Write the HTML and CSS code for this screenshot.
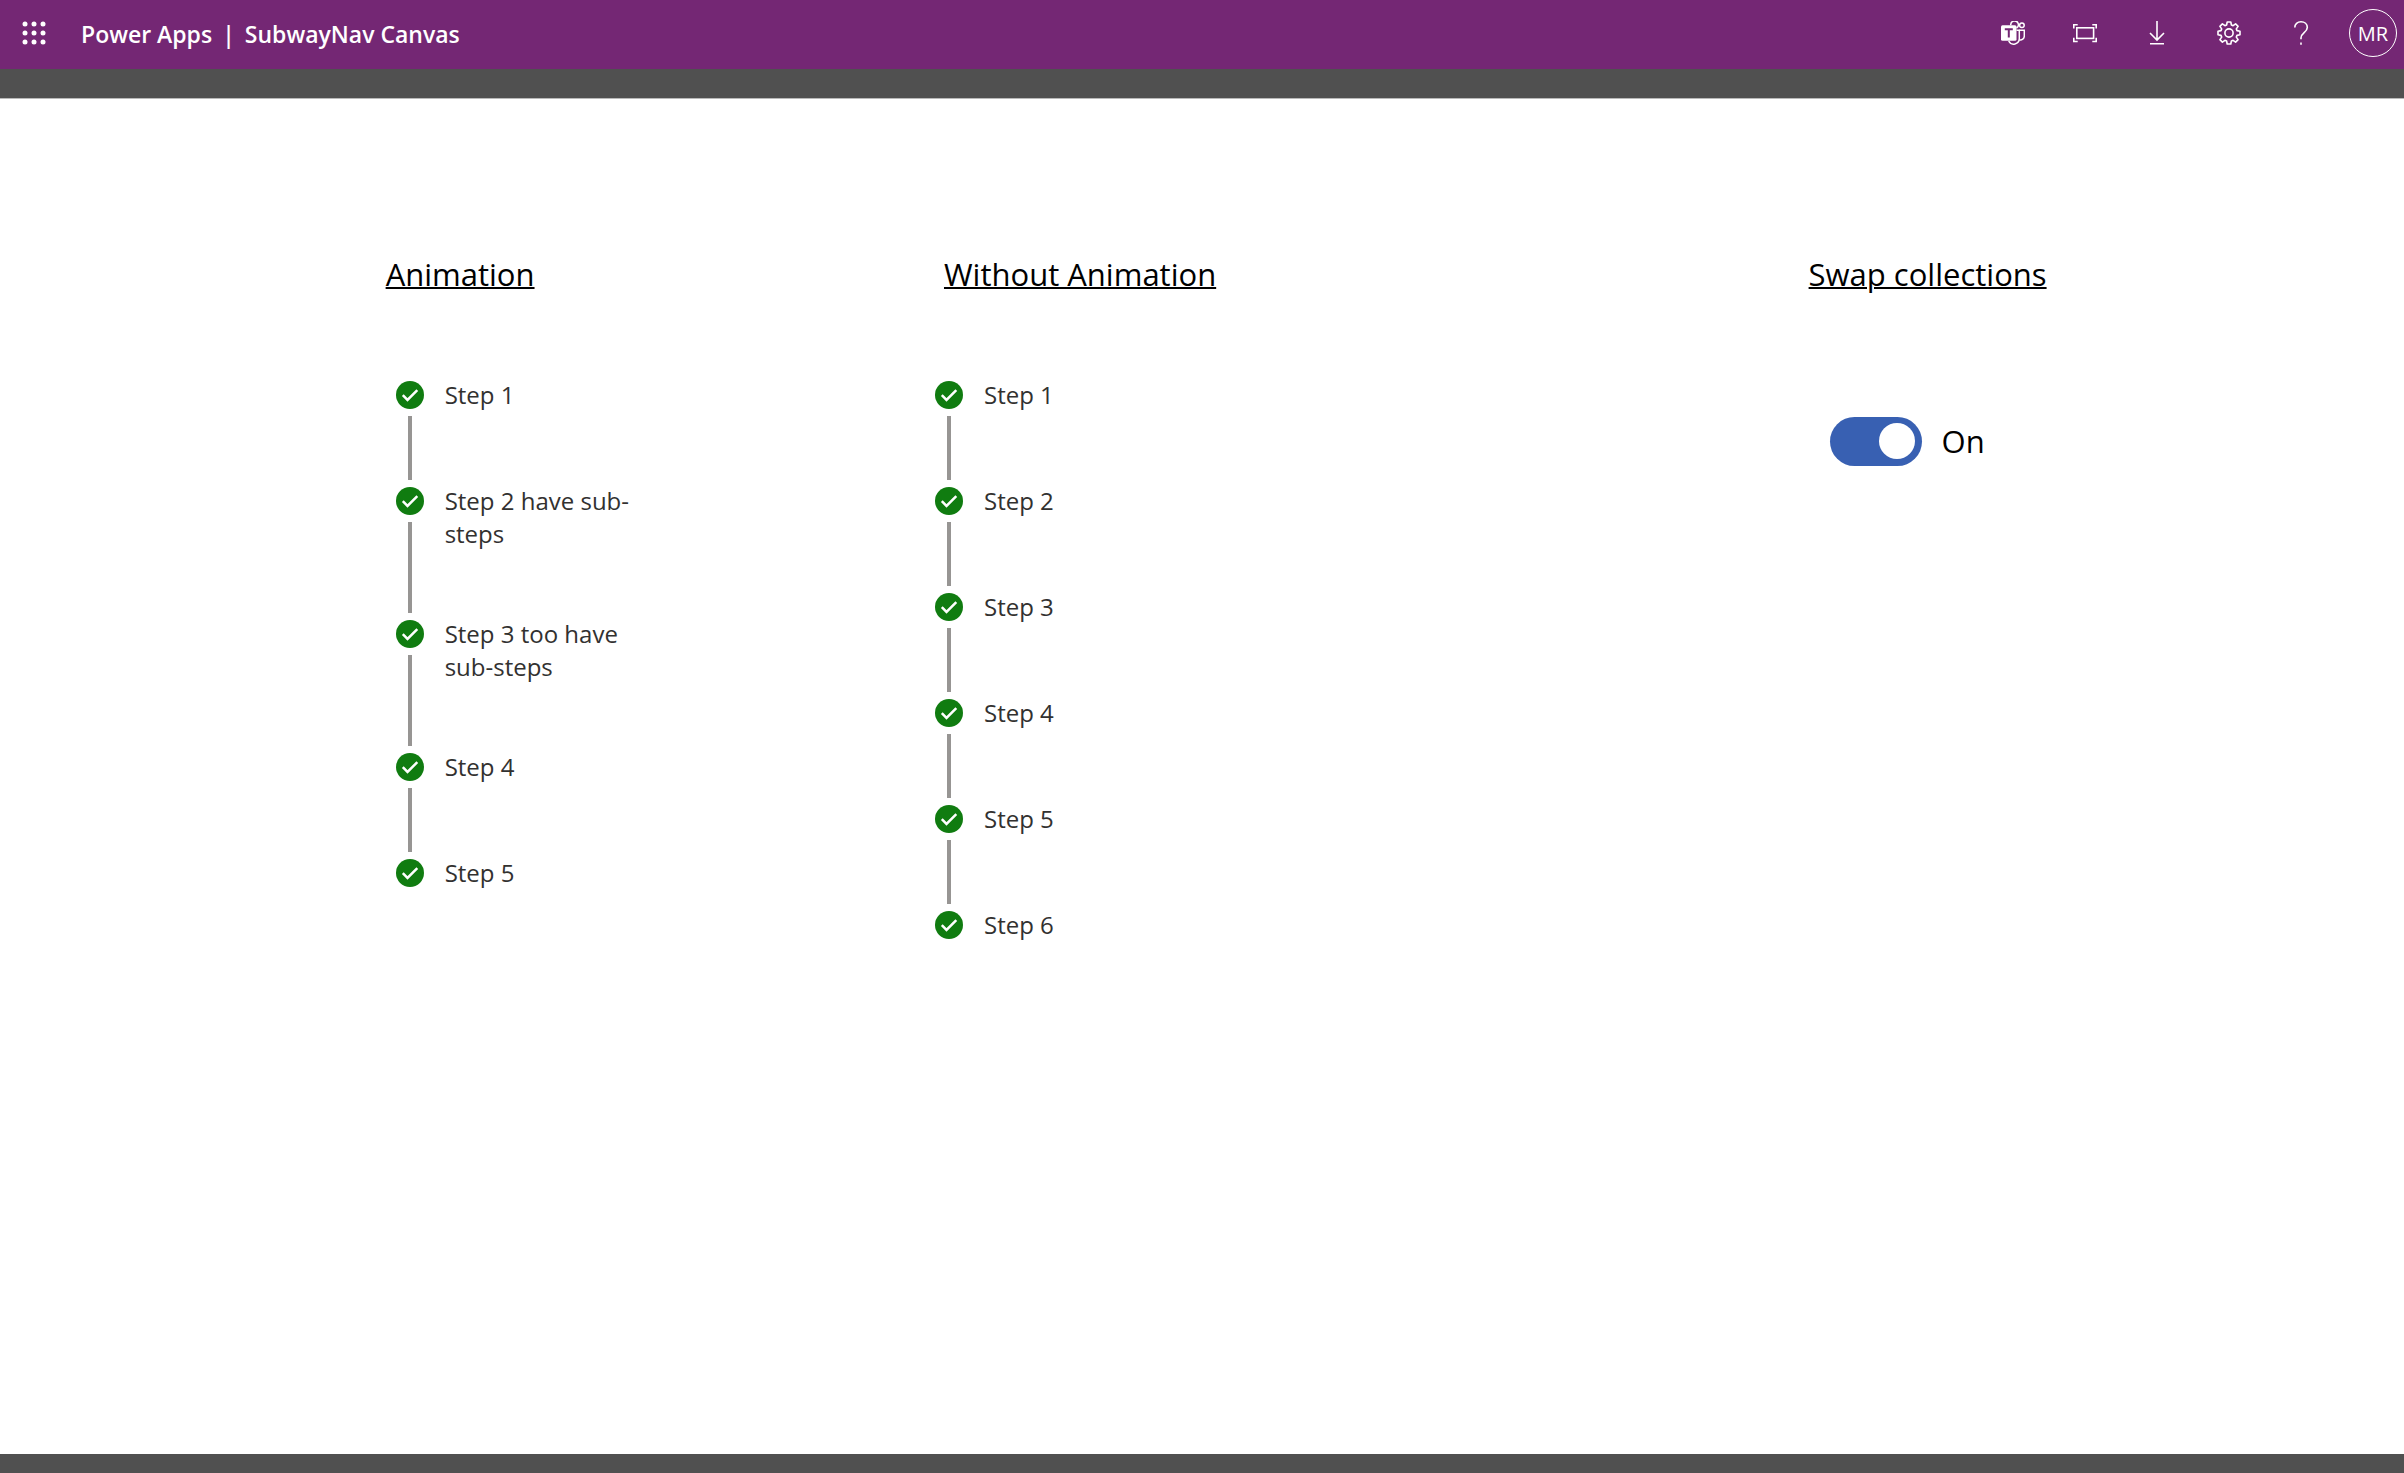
FILE: index.html
```html
<!DOCTYPE html>
<html lang="en">
<head>
<meta charset="utf-8">
<meta name="viewport" content="width=device-width, initial-scale=1">
<title>SubwayNav Canvas - Power Apps</title>
<link rel="stylesheet" href="styles.css">
</head>
<body>
<svg class="sprite" aria-hidden="true">
  <symbol id="done" viewBox="0 0 28 28">
    <circle cx="14" cy="14" r="14" fill="#107c10"/>
    <path d="M6.8 14.2l4.7 4.7 9.8-9.7" fill="none" stroke="#fff" stroke-width="2.5"/>
  </symbol>
</svg>
<header class="topbar">
  <button class="icon-button launcher" type="button" aria-label="App launcher">
    <svg class="icon" viewBox="0 0 24 24" fill="currentColor">
      <circle cx="3" cy="3" r="2.5"/><circle cx="12" cy="3" r="2.5"/><circle cx="21" cy="3" r="2.5"/>
      <circle cx="3" cy="12" r="2.5"/><circle cx="12" cy="12" r="2.5"/><circle cx="21" cy="12" r="2.5"/>
      <circle cx="3" cy="21" r="2.5"/><circle cx="12" cy="21" r="2.5"/><circle cx="21" cy="21" r="2.5"/>
    </svg>
  </button>
  <div class="brand"><a href="#">Power Apps</a><span>|</span><span>SubwayNav Canvas</span></div>
  <nav class="actions" aria-label="App actions">
    <button class="icon-button" type="button" aria-label="Chat in Teams">
      <svg class="icon" viewBox="0 0 24 24" fill="none" stroke="currentColor" stroke-width="1.5">
        <path d="M9.8 4.2A3.8 3.8 0 1 1 15.5 7"/>
        <circle cx="20.9" cy="4.2" r="2.3"/>
        <path d="M15.5 9.3h2.8v8.2a5.6 5.6 0 0 1-10.6 2.5"/>
        <path d="M18.3 9.3h5v5.6a4 4 0 0 1-5 3.9"/>
        <rect x="0" y="4.2" width="15.5" height="15.5" rx="1.5" fill="currentColor" stroke="none"/>
        <path d="M3.8 8.2h8M7.8 8.2v8.4" stroke="#742774" stroke-width="2"/>
      </svg>
    </button>
    <button class="icon-button" type="button" aria-label="Fit to window">
      <svg class="icon" viewBox="0 0 24 24" fill="none" stroke="currentColor" stroke-width="1.6">
        <rect x="3.8" y="6.8" width="16.8" height="10.6"/>
        <path d="M.8 7.5V3.8h3.9M19.3 3.8h3.9v3.7M.8 16.7v3.8h3.9M19.3 20.5h3.9v-3.8"/>
      </svg>
    </button>
    <button class="icon-button" type="button" aria-label="Download">
      <svg class="icon" viewBox="0 0 24 24" fill="none" stroke="currentColor" stroke-width="1.6">
        <path d="M12 0v18.5M5 12l7 7 7-7M5 22.8h14"/>
      </svg>
    </button>
    <button class="icon-button" type="button" aria-label="Settings">
      <svg class="icon" viewBox="0 0 24 24" fill="none" stroke="currentColor" stroke-width="1.6" stroke-linejoin="round">
        <circle cx="12" cy="12" r="4.1"/>
        <path d="M10.2 1h3.6l.6 3 1.7.7 2.5-1.8 2.5 2.5-1.8 2.5.7 1.7 3 .6v3.6l-3 .6-.7 1.7 1.8 2.5-2.5 2.5-2.5-1.8-1.7.7-.6 3h-3.6l-.6-3-1.7-.7-2.5 1.8-2.5-2.5 1.8-2.5-.7-1.7-3-.6v-3.6l3-.6.7-1.7-1.8-2.5 2.5-2.5 2.5 1.8 1.7-.7z"/>
      </svg>
    </button>
    <button class="icon-button" type="button" aria-label="Help">
      <svg class="icon" viewBox="0 0 24 24" fill="none" stroke="currentColor" stroke-width="1.6">
        <path d="M5.8 6.6C5.8 3 8.4.8 12 .8s6.3 2.2 6.3 5.7c0 4.8-6.3 5.5-6.3 10.3v1.4M12 21.4v2.4"/>
      </svg>
    </button>
    <button class="avatar" type="button" aria-label="Account">MR</button>
  </nav>
</header>
<main class="stage">
  <div class="screen">
    <section class="panel" aria-labelledby="h-animated">
      <h2 class="heading" id="h-animated">Animation</h2>
      <ol class="steps">
        <li class="step"><span class="marker"><svg class="done"><use href="#done"/></svg></span><button class="label" type="button">Step 1</button></li>
        <li class="step"><span class="marker"><svg class="done"><use href="#done"/></svg></span><button class="label" type="button">Step 2 have sub-steps</button></li>
        <li class="step"><span class="marker"><svg class="done"><use href="#done"/></svg></span><button class="label" type="button">Step 3 too have sub-steps</button></li>
        <li class="step"><span class="marker"><svg class="done"><use href="#done"/></svg></span><button class="label" type="button">Step 4</button></li>
        <li class="step"><span class="marker"><svg class="done"><use href="#done"/></svg></span><button class="label" type="button">Step 5</button></li>
      </ol>
    </section>
    <section class="panel panel-static" aria-labelledby="h-static">
      <h2 class="heading" id="h-static">Without Animation</h2>
      <ol class="steps">
        <li class="step"><span class="marker"><svg class="done"><use href="#done"/></svg></span><button class="label" type="button">Step 1</button></li>
        <li class="step"><span class="marker"><svg class="done"><use href="#done"/></svg></span><button class="label" type="button">Step 2</button></li>
        <li class="step"><span class="marker"><svg class="done"><use href="#done"/></svg></span><button class="label" type="button">Step 3</button></li>
        <li class="step"><span class="marker"><svg class="done"><use href="#done"/></svg></span><button class="label" type="button">Step 4</button></li>
        <li class="step"><span class="marker"><svg class="done"><use href="#done"/></svg></span><button class="label" type="button">Step 5</button></li>
        <li class="step"><span class="marker"><svg class="done"><use href="#done"/></svg></span><button class="label" type="button">Step 6</button></li>
      </ol>
    </section>
    <section class="panel" aria-labelledby="h-swap">
      <h2 class="heading" id="h-swap">Swap collections</h2>
      <div class="toggle">
        <input class="switch" id="swap" type="checkbox" role="switch" checked>
        <label for="swap">On</label>
      </div>
    </section>
  </div>
</main>
</body>
</html>
```
FILE: styles.css
```css
* {
  box-sizing: border-box;
}

body {
  margin: 0;
  min-height: 100vh;
  display: flex;
  flex-direction: column;
  font-family: "Open Sans", "Noto Sans", sans-serif;
  color: #000;
}

button {
  margin: 0;
  padding: 0;
  border: 0;
  background: none;
  color: inherit;
  font: inherit;
  cursor: pointer;
}

.sprite {
  display: none;
}

/* Top bar */
.topbar {
  display: flex;
  align-items: center;
  padding: 9px 7px 12px 0;
  background: #742774;
  color: #fff;
}

.icon-button {
  width: 72px;
  height: 48px;
  display: flex;
  align-items: center;
  justify-content: center;
}

.launcher {
  width: 67px;
}

.icon {
  width: 24px;
  height: 24px;
}

.brand {
  display: flex;
  gap: 10px;
  padding: 2px 0 0 14px;
  font-size: 23px;
  font-weight: 600;
  line-height: 32px;
}

.brand a {
  color: inherit;
  text-decoration: none;
}

.actions {
  display: flex;
  align-items: center;
  margin-left: auto;
}

.avatar {
  width: 48px;
  height: 48px;
  margin-left: 12px;
  border: 1px solid #fff;
  border-radius: 50%;
  font-size: 20px;
}

/* Canvas */
.stage {
  flex: 1;
  display: flex;
  padding: 29px 0 19px;
  background: #505050;
}

.screen {
  flex: 1;
  display: grid;
  grid-template-columns: 546fr 876fr 596fr;
  padding: 153px 0 0 16%;
  border-top: 1px solid #b9b9b9;
  background: #fff;
}

.heading {
  margin: 0;
  padding-left: 1px;
  font-size: 31px;
  font-weight: 400;
  line-height: 44px;
  text-decoration: underline;
  text-decoration-thickness: 2px;
}

.panel-static .heading {
  padding-left: 13px;
}

/* Steps */
.steps {
  margin: 82px 0 0;
  padding: 0 0 0 11px;
  list-style: none;
}

.panel-static .steps {
  padding-left: 4px;
}

.step {
  display: flex;
  gap: 21px;
  min-height: 106px;
}

.step:last-child {
  min-height: 0;
}

.marker {
  display: flex;
  flex-direction: column;
  align-items: center;
  padding: 3px 0 4px;
}

.done {
  width: 28px;
  height: 28px;
}

.step:not(:last-child) .marker::after {
  content: "";
  flex: 1;
  width: 4px;
  margin-top: 7px;
  background: #979593;
}

.label {
  align-self: flex-start;
  max-width: 192px;
  padding-bottom: 67px;
  font-size: 24px;
  line-height: 33px;
  text-align: left;
  color: #323130;
}

/* Toggle */
.toggle {
  display: flex;
  align-items: center;
  gap: 20px;
  margin-top: 120px;
  padding-left: 22px;
  font-size: 31px;
  line-height: 50px;
}

.switch {
  appearance: none;
  display: flex;
  align-items: center;
  width: 92px;
  height: 49px;
  margin: 0;
  padding: 0 7px;
  border-radius: 25px;
  background: #3860b2;
  cursor: pointer;
}

.switch::before {
  content: "";
  width: 36px;
  height: 36px;
  border-radius: 50%;
  background: #fff;
}

.switch:checked::before {
  margin-left: auto;
}
```
